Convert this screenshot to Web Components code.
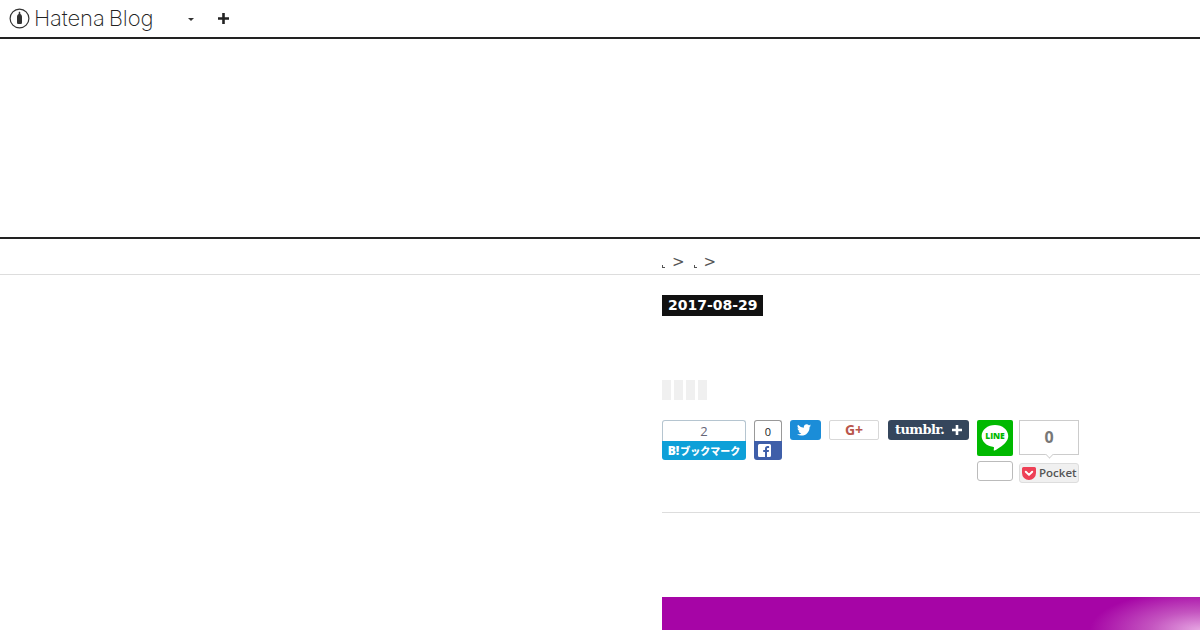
<!DOCTYPE html>
<html lang="ja">
<head>
<meta charset="utf-8">
<title>Hatena Blog</title>
<style>
  html, body { margin: 0; padding: 0; background: #fff; overflow: hidden; }
  body { height: 630px; font-family: "DejaVu Sans", sans-serif; }
</style>
</head>
<body>
<hatena-bar></hatena-bar>
<blog-header></blog-header>
<bread-crumb></bread-crumb>
<blog-article date="2017-08-29"></blog-article>

<script>
class HatenaBar extends HTMLElement {
  constructor() {
    super();
    this.attachShadow({ mode: "open" });
  }

  connectedCallback() {
    this.shadowRoot.innerHTML = `
      <style>
        :host { display: flex; align-items: center; height: 37px; border-bottom: 2px solid #222; padding-left: 9px; }
        .logo { display: flex; align-items: center; gap: 4px; width: 143px; }
        .logo svg { display: block; flex: none; }
        .nombre { font: 200 22px/1 Inter, sans-serif; color: #222; letter-spacing: -.1px; white-space: nowrap; word-spacing: -2px; margin-top: -2px; }
        .flecha { width: 0; height: 0; margin-left: 36px; margin-top: 1px; border: 3px solid transparent; border-top: 3px solid #333; border-bottom: 0; }
        .mas { margin-left: 24px; display: block; }
      </style>
      <div class="logo">
        <svg width="21" height="21" viewBox="0 0 21 21">
          <circle cx="10.5" cy="10.5" r="9.4" fill="none" stroke="#333" stroke-width="1.2"/>
          <path d="M10.5 3.800c.6 0 .8.5.8 1.200v1.100c1.200.7 1.700 1.600 1.700 2.800v5.600c0 1-.6 1.500-1.400 1.500H9.400c-.8 0-1.400-.5-1.400-1.500V8.900c0-1.200.5-2.100 1.700-2.800V5c0-.7.2-1.200.8-1.200z" fill="#333"/>
        </svg>
        <span class="nombre">Hatena Blog</span>
      </div>
      <span class="flecha"></span>
      <svg class="mas" width="11" height="11" viewBox="0 0 11 11"><path d="M4.200 0h2.600v4.200H11v2.600H6.800V11H4.200V6.800H0V4.200h4.200z" fill="#222"/></svg>
    `;
  }
}

class BlogHeader extends HTMLElement {
  constructor() {
    super();
    this.attachShadow({ mode: "open" });
  }

  connectedCallback() {
    this.shadowRoot.innerHTML = `
      <style>
        :host { display: block; height: 198px; border-bottom: 2px solid #222; }
      </style>
    `;
  }
}

class BreadCrumb extends HTMLElement {
  constructor() {
    super();
    this.attachShadow({ mode: "open" });
  }

  connectedCallback() {
    // las categorias salen como un puntito, solo se ve la flecha
    this.shadowRoot.innerHTML = `
      <style>
        :host { display: flex; height: 36px; border-bottom: 1px solid #ddd; padding-left: 662px; box-sizing: border-box; align-items: flex-start; padding-top: 14px; }
        .item { display: flex; align-items: flex-start; width: 31.500px; }
        .punto { width: 2px; height: 2px; border-left: 1px solid #555; border-bottom: 1px solid #555; margin-top: 12px; }
        .sep { font: 15px/18px "DejaVu Sans", sans-serif; color: #555; margin-left: 7px; }
      </style>
      <div class="item"><span class="punto"></span><span class="sep">&gt;</span></div>
      <div class="item"><span class="punto"></span><span class="sep">&gt;</span></div>
    `;
  }
}

class ShareButtons extends HTMLElement {
  constructor() {
    super();
    this.attachShadow({ mode: "open" });
  }

  connectedCallback() {
    this.shadowRoot.innerHTML = `
      <style>
        :host { display: flex; align-items: flex-start; gap: 8px; height: 63px; }
        .hb { width: 84px; }
        .fb { width: 28px; }
        .cuenta { box-sizing: border-box; border: 1px solid #bbb; border-bottom: 0; border-radius: 3px 3px 0 0; text-align: center; height: 21px; }
        .hb .cuenta { font: 13px/20px "Open Sans", sans-serif; color: #667; border-color: #b5c5d0; }
        .fb .cuenta { font: 11px/21px "Open Sans", sans-serif; color: #222; border-color: #999; }
        .hb-btn { height: 19px; background: #0ea0d8; border-radius: 0 0 3px 3px; color: #fff; font: 900 10px/19px "Noto Sans CJK JP", sans-serif; text-align: center; white-space: nowrap; }
        .hb-btn b { font: 800 12px/19px "Open Sans", sans-serif; margin-right: 1px; }
        .fb-btn { height: 19px; background: #3f5fa9; border-radius: 0 0 3px 3px; display: flex; align-items: center; padding-left: 4px; }
        .tw { width: 31px; height: 20px; background: #1b8dd8; border-radius: 3px; display: flex; align-items: center; padding-left: 7px; box-sizing: border-box; }
        .gp { box-sizing: border-box; width: 50px; height: 20px; border: 1px solid #d8d8d8; border-radius: 2px; color: #b9564c; font: 700 14px/18px "Open Sans", sans-serif; text-align: center; }
        .tb { box-sizing: border-box; width: 81px; height: 20px; margin-left: 1px; background: #35465c; border-radius: 3px; color: #fff; font: 700 13px/18px "DejaVu Serif", serif; display: flex; align-items: center; justify-content: space-between; padding: 0 7px; letter-spacing: -.6px; }
        .tb svg { display: block; }
        .col { display: flex; flex-direction: column; }
        .line { width: 36px; gap: 5px; }
        .line-btn { width: 36px; height: 36px; background: #00b900; border-radius: 2px; position: relative; display: flex; align-items: center; justify-content: center; }
        .line-btn svg { position: absolute; left: 4px; top: 4px; }
        .line-btn span { position: relative; top: -2px; color: #00b900; font: 800 8.500px/1 "Open Sans", sans-serif; letter-spacing: -.1px; }
        .vacio { box-sizing: border-box; height: 20px; border: 1px solid #bbb; border-radius: 3px; }
        .pocket { width: 60px; margin-left: -2px; }
        .caja { box-sizing: border-box; height: 35px; border: 1px solid #ccc; font: 700 16px/33px "Open Sans", sans-serif; color: #777; text-align: center; position: relative; }
        .caja::after { content: ""; position: absolute; left: 26px; bottom: -4px; width: 6px; height: 6px; background: #fff; border-right: 1px solid #ccc; border-bottom: 1px solid #ccc; transform: rotate(45deg) scale(.8); }
        .pk-btn { box-sizing: border-box; margin-top: 8px; height: 20px; border: 1px solid #ddd; border-radius: 3px; background: #f0f0f0; display: flex; align-items: center; gap: 3px; padding-left: 2px; font: 600 11.500px/18px "Open Sans", sans-serif; color: #555; white-space: nowrap; }
        .pk-btn svg { display: block; flex: none; }
      </style>
      <div class="hb">
        <div class="cuenta">2</div>
        <div class="hb-btn"><b>B!</b>ブックマーク</div>
      </div>
      <div class="fb">
        <div class="cuenta">0</div>
        <div class="fb-btn">
          <svg width="13" height="13" viewBox="0 0 13 13"><path d="M1.500 0h10A1.500 1.500 0 0 1 13 1.500v10a1.500 1.500 0 0 1-1.500 1.500H9V8h1.700l.3-2H9V5c0-.6.2-1 1-1h1.100V2.200C10.800 2.100 10.200 2 9.500 2 8 2 7 3 7 4.700V6H5.200v2H7v5H1.500A1.500 1.500 0 0 1 0 11.500v-10A1.500 1.500 0 0 1 1.500 0z" fill="#fff"/></svg>
        </div>
      </div>
      <div class="tw">
        <svg width="14" height="12" viewBox="0 0 24 20"><path d="M24 2.400c-.9.400-1.800.7-2.800.8 1-.6 1.800-1.600 2.200-2.700-1 .6-2 1-3.100 1.200A4.900 4.900 0 0 0 16.600 0c-3.200 0-5.500 3-4.800 6A14 14 0 0 1 1.700.9 4.900 4.900 0 0 0 3.200 7.500c-.8 0-1.600-.2-2.200-.6 0 2.300 1.600 4.500 4 5-.7.200-1.500.2-2.200.1.600 2 2.500 3.400 4.600 3.400A9.900 9.900 0 0 1 0 17.400 14 14 0 0 0 7.500 19.600c9.100 0 14.300-7.700 14-14.600 1-.7 1.800-1.600 2.500-2.600z" fill="#fff"/></svg>
      </div>
      <div class="gp">G+</div>
      <div class="tb">
        <span>tumblr.</span>
        <svg width="10" height="10" viewBox="0 0 10 10"><path d="M3.700 0h2.600v3.700H10v2.600H6.300V10H3.700V6.300H0V3.700h3.700z" fill="#fff"/></svg>
      </div>
      <div class="col line">
        <div class="line-btn">
          <svg width="28" height="28" viewBox="0 0 26 26"><path d="M13 1C6.100 1 .6 5.500.6 11.100c0 5 4.400 9.200 10.300 10 .4.100 1 .3 1.100.6.100.3.100.8 0 1.100l-.2 1c0 .3-.2 1.200 1.100.7 1.300-.6 7.100-4.200 9.700-7.200 1.800-2 2.700-4 2.700-6.200C25.300 5.500 19.900 1 13 1z" fill="#fff"/></svg>
          <span>LINE</span>
        </div>
        <div class="vacio"></div>
      </div>
      <div class="col pocket">
        <div class="caja">0</div>
        <div class="pk-btn">
          <svg width="14" height="13" viewBox="0 0 14 13"><path d="M1.500 0h11A1.500 1.500 0 0 1 14 1.500V6a7 7 0 0 1-14 0V1.500A1.500 1.500 0 0 1 1.500 0z" fill="#ee4056"/><path d="M3.800 4.800 7 7.900l3.200-3.100" fill="none" stroke="#fff" stroke-width="2" stroke-linecap="round" stroke-linejoin="round"/></svg>
          <span>Pocket</span>
        </div>
      </div>
    `;
  }
}

class BlogArticle extends HTMLElement {
  constructor() {
    super();
    this.attachShadow({ mode: "open" });
  }

  connectedCallback() {
    const fecha = this.getAttribute("date");

    this.shadowRoot.innerHTML = `
      <style>
        :host { display: block; margin-left: 662px; padding-top: 20px; }
        .fecha { display: inline-block; vertical-align: top; box-sizing: border-box; width: 101px; background: #111; color: #fff; font: 700 14px/21px "DejaVu Sans", sans-serif; padding-left: 6px; white-space: nowrap; }
        .cabecera { height: 21px; }
        .titulo { display: flex; gap: 3px; margin-top: 64px; height: 20px; }
        .titulo span { width: 9px; background: #f0f0f0; }
        share-buttons { margin-top: 20px; }
        hr { border: 0; border-top: 1px solid #ddd; margin: 29px 0 0; }
        .banner { margin-top: 84px; height: 33px; background: radial-gradient(ellipse 110px 40px at 100% 100%, #e6a6e2 0%, #c455c0 45%, rgba(166,5,166,0) 100%), #a605a6; }
      </style>
      <div class="cabecera"><span class="fecha">${fecha}</span></div>
      <div class="titulo"><span></span><span></span><span></span><span></span></div>
      <share-buttons></share-buttons>
      <hr>
      <div class="banner"></div>
    `;
  }
}

customElements.define("hatena-bar", HatenaBar);
customElements.define("blog-header", BlogHeader);
customElements.define("bread-crumb", BreadCrumb);
customElements.define("share-buttons", ShareButtons);
customElements.define("blog-article", BlogArticle);
</script>
</body>
</html>
